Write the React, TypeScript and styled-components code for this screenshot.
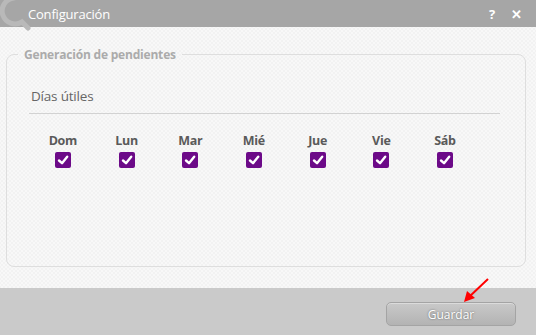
import React from 'react';
import styled, { createGlobalStyle } from 'styled-components';

const GlobalStyle = createGlobalStyle`
  html, body {
    margin: 0;
    padding: 0;
    background: #cacaca;
  }
  * {
    box-sizing: border-box;
  }
`;

const Window = styled.div`
  display: flex;
  flex-direction: column;
  width: 536px;
  height: 335px;
  font-family: 'Open Sans', 'Noto Sans', sans-serif;
  overflow: hidden;
`;

const TitleBar = styled.div`
  position: relative;
  display: flex;
  align-items: center;
  height: 27px;
  padding-left: 28px;
  padding-right: 8px;
  background: #a6a6a6;
  color: #fff;
`;

const Logo = styled.svg`
  position: absolute;
  left: -6px;
  top: -8px;
`;

const Title = styled.div`
  flex: 1;
  font-size: 13px;
  letter-spacing: -0.2px;
`;

const TitleButton = styled.span`
  width: 24px;
  text-align: center;
  font-size: 13px;
  font-weight: 700;
`;

const Body = styled.div`
  flex: 1;
  padding: 19px 10px 21px 6px;
  background-color: #f8f8f8;
  background-image: radial-gradient(#eeeeee 0.6px, transparent 0.9px),
    radial-gradient(#eeeeee 0.6px, transparent 0.9px);
  background-size: 4px 4px;
  background-position: 0 0, 2px 2px;
  display: flex;
`;

const Group = styled.fieldset`
  flex: 1;
  margin: 0;
  padding: 24px 25px 0 22px;
  border: 1px solid #dedede;
  border-radius: 8px;
`;

const GroupLegend = styled.legend`
  margin-left: -11px;
  padding: 0 6px;
  font-size: 12px;
  font-weight: 700;
  color: #ababab;
  letter-spacing: -0.2px;
`;

const FieldLabel = styled.div`
  padding: 0 0 8px 2px;
  font-size: 13.5px;
  color: #666;
  border-bottom: 1px solid #d2d2d2;
  letter-spacing: -0.2px;
`;

const DaysRow = styled.div`
  display: grid;
  grid-template-columns: repeat(7, 63.7px);
  margin-top: 19px;
  margin-left: 2px;
`;

const Day = styled.div`
  display: flex;
  flex-direction: column;
  align-items: center;
  gap: 4px;
`;

const DayName = styled.span`
  font-size: 12.5px;
  font-weight: 700;
  color: #5a5a5a;
  line-height: 15px;
  letter-spacing: -0.3px;
`;

const Check = styled.span<{ $checked: boolean }>`
  display: flex;
  align-items: center;
  justify-content: center;
  width: 16px;
  height: 16px;
  border-radius: 2px;
  background: ${(p) => (p.$checked ? '#6c0a88' : '#fff')};
`;

const Footer = styled.div`
  position: relative;
  display: flex;
  justify-content: flex-end;
  height: 47px;
  padding: 14px 20px 0 0;
  background: #cacaca;
`;

const SaveButton = styled.button`
  width: 130px;
  height: 24px;
  border: 1px solid #a4a4a4;
  border-radius: 5px;
  background: linear-gradient(#c9c9c9, #b3b3b3);
  color: #fff;
  font-family: 'Open Sans', 'Noto Sans', sans-serif;
  font-size: 12px;
  text-shadow: 0 0 2px rgba(0, 0, 0, 0.5);
  box-shadow: inset 0 1px 0 rgba(255, 255, 255, 0.35);
`;

const Arrow = styled.svg`
  position: absolute;
  left: 460px;
  top: -12px;
`;

const days = ['Dom', 'Lun', 'Mar', 'Mié', 'Jue', 'Vie', 'Sáb'];

export default function App() {
  return (
    <Window>
      <GlobalStyle />
      <TitleBar>
        <Logo width="40" height="40" viewBox="0 0 40 40">
          <path
            d="M20 6 A13 13 0 1 0 28 30 L34 36"
            fill="none"
            stroke="#b9b9b9"
            strokeWidth="5"
            strokeLinecap="round"
          />
        </Logo>
        <Title>Configuración</Title>
        <TitleButton>?</TitleButton>
        <TitleButton>✕</TitleButton>
      </TitleBar>
      <Body>
        <Group>
          <GroupLegend>Generación de pendientes</GroupLegend>
          <FieldLabel>Días útiles</FieldLabel>
          <DaysRow>
            {days.map((d) => (
              <Day key={d}>
                <DayName>{d}</DayName>
                <Check $checked>
                  <svg width="12" height="12" viewBox="0 0 12 12">
                    <path
                      d="M2 6.5 L5 9.2 L10.2 2.8"
                      fill="none"
                      stroke="#fff"
                      strokeWidth="2.4"
                      strokeLinecap="round"
                      strokeLinejoin="round"
                    />
                  </svg>
                </Check>
              </Day>
            ))}
          </DaysRow>
        </Group>
      </Body>
      <Footer>
        <Arrow width="32" height="30" viewBox="0 0 32 30">
          <line x1="28" y1="3" x2="9" y2="21" stroke="#f00" strokeWidth="2" />
          <polygon points="4,26 7,15 15,22" fill="#f00" />
        </Arrow>
        <SaveButton>Guardar</SaveButton>
      </Footer>
    </Window>
  );
}
